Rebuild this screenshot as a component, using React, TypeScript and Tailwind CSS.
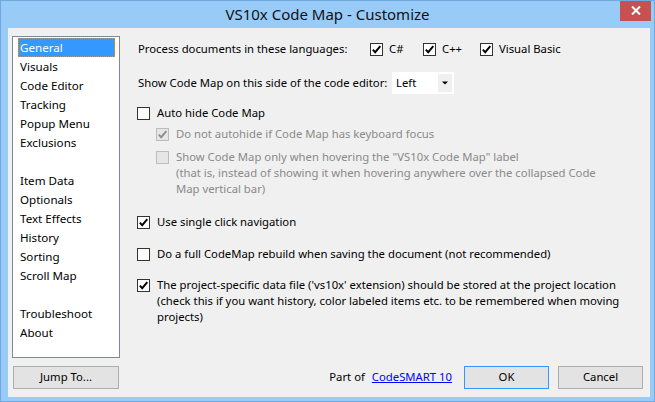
import React from 'react';

const font = { fontFamily: '"Segoe UI", "Noto Sans", sans-serif' };

function CheckBox({ checked, disabled }: { checked?: boolean; disabled?: boolean }) {
  return (
    <span
      className={`flex h-[13px] w-[13px] shrink-0 items-center justify-center border ${
        disabled ? 'border-[#bcbcbc] bg-[#e6e6e6]' : 'border-[#333333] bg-white'
      }`}
    >
      {checked ? (
        <svg width="11" height="11" viewBox="0 0 11 11">
          <path
            d="M1.8 5.6 L4.2 8.2 L9.3 2.2"
            fill="none"
            stroke={disabled ? '#8f8f8f' : '#000'}
            strokeWidth="1.9"
          />
        </svg>
      ) : null}
    </span>
  );
}

const sections = [
  'General',
  'Visuals',
  'Code Editor',
  'Tracking',
  'Popup Menu',
  'Exclusions',
  '',
  'Item Data',
  'Optionals',
  'Text Effects',
  'History',
  'Sorting',
  'Scroll Map',
  '',
  'Troubleshoot',
  'About',
];

function Option({
  checked,
  disabled,
  lines,
  className,
}: {
  checked?: boolean;
  disabled?: boolean;
  lines: string[];
  className?: string;
}) {
  return (
    <div className={`flex ${className ?? ''}`}>
      <div className="flex h-[16px] items-center">
        <CheckBox checked={checked} disabled={disabled} />
      </div>
      <div className={`ml-[7px] whitespace-nowrap leading-[16px] ${disabled ? 'text-[#8a8a8a]' : 'text-black'}`}>
        {lines.map((l) => (
          <div key={l}>{l}</div>
        ))}
      </div>
    </div>
  );
}

export default function App() {
  return (
    <div
      className="flex h-[402px] w-[655px] flex-col overflow-hidden border border-[#6fa9e0] bg-[#99cbf8] text-[11.3px] text-black"
      style={font}
    >
      <div className="relative flex h-[27px] shrink-0 items-center justify-center">
        <span className="text-[15px] text-[#111]">VS10x Code Map - Customize</span>
        <div className="absolute right-[3px] top-[-1px] flex h-[21px] w-[31px] items-center justify-center bg-[#c75050]">
          <svg width="10" height="9" viewBox="0 0 10 9">
            <path d="M1 0.5 L9 8.5 M9 0.5 L1 8.5" stroke="#fff" strokeWidth="2" />
          </svg>
        </div>
      </div>

      <div className="ml-[7px] mr-[4px] mb-[4px] flex flex-1 flex-col bg-[#f0f0f0]">
        <div className="flex">
          <div className="ml-[4px] mt-[8px] h-[322px] w-[108px] border border-[#828790] bg-white pl-[5px] pr-[4px] pt-[1px] text-[11.6px]">
            {sections.map((s, i) =>
              i === 0 ? (
                <div
                  key={i}
                  className="flex h-[19px] items-center border border-dotted border-[#e0902c] bg-[#3399ff] pl-[1px] text-white"
                >
                  {s}
                </div>
              ) : (
                <div key={i} className="flex h-[19px] items-center pl-[2px]">
                  {s}
                </div>
              )
            )}
          </div>

          <div className="ml-[17px] flex flex-col pt-[12px]">
            <div className="flex h-[18px] items-center">
              <span className="w-[233px] pl-[1px]">Process documents in these languages:</span>
              <span className="flex w-[53px] items-center">
                <CheckBox checked />
                <span className="ml-[6px]">C#</span>
              </span>
              <span className="flex w-[57px] items-center">
                <CheckBox checked />
                <span className="ml-[6px]">C++</span>
              </span>
              <span className="flex items-center">
                <CheckBox checked />
                <span className="ml-[6px]">Visual Basic</span>
              </span>
            </div>

            <div className="mt-[14px] flex h-[22px] items-center">
              <span className="w-[255px] whitespace-nowrap pl-[1px]">Show Code Map on this side of the code editor:</span>
              <div className="flex h-[22px] w-[62px] items-center bg-white p-[2px]">
                <span className="flex-1 pl-[2px]">Left</span>
                <div className="flex h-[18px] w-[14px] items-center justify-center bg-[#f0f0f0]">
                  <svg width="6" height="4" viewBox="0 0 6 4">
                    <path d="M0 0.5 H6 L3 3.5 Z" fill="#000" />
                  </svg>
                </div>
              </div>
            </div>

            <Option className="mt-[11px]" lines={['Auto hide Code Map']} />
            <Option
              className="ml-[19px] mt-[5px]"
              checked
              disabled
              lines={['Do not autohide if Code Map has keyboard focus']}
            />
            <Option
              className="ml-[19px] mt-[7px]"
              disabled
              lines={[
                'Show Code Map only when hovering the "VS10x Code Map" label',
                '(that is, instead of showing it when hovering anywhere over the collapsed Code',
                'Map vertical bar)',
              ]}
            />
            <Option className="mt-[17px]" checked lines={['Use single click navigation']} />
            <Option
              className="mt-[16px]"
              lines={['Do a full CodeMap rebuild when saving the document (not recommended)']}
            />
            <Option
              className="mt-[15px]"
              checked
              lines={[
                "The project-specific data file ('vs10x' extension) should be stored at the project location",
                '(check this if you want history, color labeled items etc. to be remembered when moving',
                'projects)',
              ]}
            />
          </div>
        </div>

        <div className="mt-[8px] flex h-[23px] items-center pl-[5px] pr-[7px]">
          <button className="h-[23px] w-[106px] border border-[#adadad] bg-[#e3e3e3]">Jump To...</button>
          <span className="ml-auto">Part of</span>
          <a className="ml-[7px] text-[#0000ff] underline">CodeSMART 10</a>
          <button className="ml-[12px] h-[23px] w-[85px] border border-[#3399ff] bg-[#e3e3e3]">OK</button>
          <button className="ml-[9px] h-[23px] w-[85px] border border-[#adadad] bg-[#e3e3e3]">Cancel</button>
        </div>
      </div>
    </div>
  );
}
